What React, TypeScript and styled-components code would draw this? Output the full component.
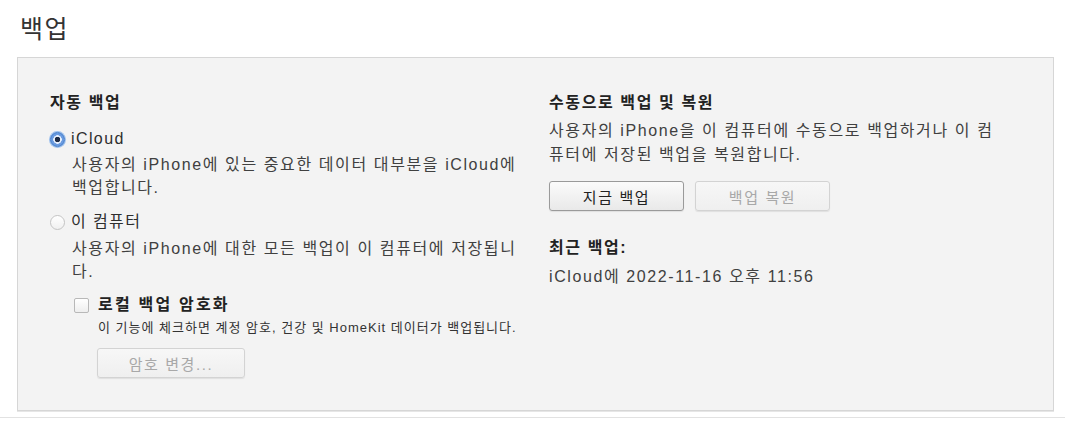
import React from 'react';
import styled, { createGlobalStyle } from 'styled-components';

const GlobalStyle = createGlobalStyle`
  html, body {
    margin: 0;
    padding: 0;
    background: #ffffff;
  }
  body {
    font-family: "Liberation Sans", "Noto Sans CJK KR", sans-serif;
    color: #333333;
  }
`;

const Page = styled.div`
  width: 1067px;
  height: 425px;
  box-sizing: border-box;
  padding-top: 15px;
  position: relative;
`;

const PageTitle = styled.h1`
  margin: 0 0 14px 20px;
  font-size: 25px;
  font-weight: 400;
  line-height: 28px;
  color: #333;
  letter-spacing: 1.5px;
`;

const Panel = styled.section`
  margin-left: 17px;
  width: 1037px;
  height: 354px;
  box-sizing: border-box;
  background: #f3f3f3;
  border: 1px solid #d6d6d6;
  box-shadow: 0 1px 0 #e6e6e6;
  padding: 35px 20px 0 32px;
  display: grid;
  grid-template-columns: 499px 1fr;
`;

const Divider = styled.div`
  position: absolute;
  left: 0;
  right: 2px;
  top: 417px;
  height: 1px;
  background: #e2e2e2;
`;

const Column = styled.div`
  display: flex;
  flex-direction: column;
`;

const Heading = styled.h2<{ $top?: number }>`
  margin: ${({ $top }) => $top || 0}px 0 0 0;
  font-size: 16px;
  font-weight: 700;
  line-height: 20px;
  color: #222;
  letter-spacing: 1.6px;
`;

const Option = styled.label<{ $top: number }>`
  display: flex;
  align-items: center;
  gap: 6px;
  margin-top: ${({ $top }) => $top}px;
  font-size: 16px;
  line-height: 22px;
  color: #2e2e2e;
  letter-spacing: 1.4px;
`;

const Radio = styled.span<{ $checked?: boolean }>`
  width: 15px;
  height: 15px;
  border-radius: 50%;
  box-sizing: border-box;
  border: 1px solid ${({ $checked }) => ($checked ? '#3b78c9' : '#c4c4c4')};
  background: ${({ $checked }) =>
    $checked
      ? 'radial-gradient(circle, #1d2a44 0 2.5px, #e8f0fb 3px 4px, #6a9be0 4.5px)'
      : 'linear-gradient(#ffffff, #f0f0f0)'};
  box-shadow: ${({ $checked }) => ($checked ? '0 0 0 1px #9cc0ee' : 'none')};
  flex-shrink: 0;
`;

const Description = styled.p<{ $indent: number; $top: number; $lh?: number }>`
  margin: ${({ $top }) => $top}px 0 0 ${({ $indent }) => $indent}px;
  font-size: 16px;
  line-height: ${({ $lh }) => $lh || 23}px;
  color: #404040;
  letter-spacing: 1.6px;
  white-space: nowrap;
`;

const CheckRow = styled.label`
  display: flex;
  align-items: center;
  gap: 9px;
  margin: 11px 0 0 24px;
  font-size: 16px;
  font-weight: 700;
  line-height: 22px;
  color: #222;
  letter-spacing: 2.2px;
`;

const Checkbox = styled.span`
  width: 15px;
  height: 15px;
  box-sizing: border-box;
  border: 1px solid #b8b8b8;
  border-radius: 2px;
  background: linear-gradient(#ffffff, #eeeeee);
  flex-shrink: 0;
`;

const SmallNote = styled.p`
  margin: 2px 0 0 48px;
  font-size: 13px;
  line-height: 20px;
  color: #333;
  letter-spacing: 1px;
  white-space: nowrap;
`;

const Button = styled.button<{ $disabled?: boolean; $width: number }>`
  width: ${({ $width }) => $width}px;
  height: 30px;
  box-sizing: border-box;
  border-radius: 3px;
  border: 1px solid ${({ $disabled }) => ($disabled ? '#d3d3d3' : '#9a9a9a')};
  background: ${({ $disabled }) =>
    $disabled ? 'linear-gradient(#f7f7f7, #efefef)' : 'linear-gradient(#fbfbfb, #e9e9e9)'};
  color: ${({ $disabled }) => ($disabled ? '#a8a8a8' : '#222')};
  font-family: "Liberation Sans", "Noto Sans CJK KR", sans-serif;
  font-size: 15px;
  letter-spacing: 1.6px;
  padding: 0;
  box-shadow: 0 1px 1px rgba(0, 0, 0, 0.08);
`;

const ButtonRow = styled.div<{ $top: number; $indent?: number }>`
  display: flex;
  gap: 11px;
  margin: ${({ $top }) => $top}px 0 0 ${({ $indent }) => $indent || 0}px;
`;

const App: React.FC = () => {
  return (
    <>
      <GlobalStyle />
      <Page>
        <PageTitle>백업</PageTitle>
        <Panel>
          <Column>
            <Heading>자동 백업</Heading>
            <Option $top={15}>
              <Radio $checked />
              iCloud
            </Option>
            <Description $indent={22} $top={3}>
              사용자의 iPhone에 있는 중요한 데이터 대부분을 iCloud에
              <br />
              백업합니다.
            </Description>
            <Option $top={12}>
              <Radio />
              이 컴퓨터
            </Option>
            <Description $indent={22} $top={4}>
              사용자의 iPhone에 대한 모든 백업이 이 컴퓨터에 저장됩니
              <br />
              다.
            </Description>
            <CheckRow>
              <Checkbox />
              로컬 백업 암호화
            </CheckRow>
            <SmallNote>이 기능에 체크하면 계정 암호, 건강 및 HomeKit 데이터가 백업됩니다.</SmallNote>
            <ButtonRow $top={10} $indent={47}>
              <Button $disabled $width={148}>암호 변경...</Button>
            </ButtonRow>
          </Column>
          <Column>
            <Heading>수동으로 백업 및 복원</Heading>
            <Description $indent={0} $top={6} $lh={24}>
              사용자의 iPhone을 이 컴퓨터에 수동으로 백업하거나 이 컴
              <br />
              퓨터에 저장된 백업을 복원합니다.
            </Description>
            <ButtonRow $top={14}>
              <Button $width={135}>지금 백업</Button>
              <Button $disabled $width={135}>백업 복원</Button>
            </ButtonRow>
            <Heading $top={27}>최근 백업:</Heading>
            <Description $indent={0} $top={7}>
              iCloud에 2022-11-16 오후 11:56
            </Description>
          </Column>
        </Panel>
        <Divider />
      </Page>
    </>
  );
};

export default App;
